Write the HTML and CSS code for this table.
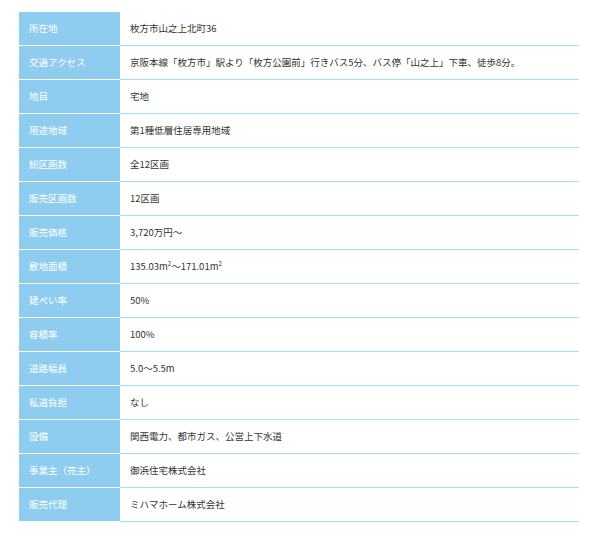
FILE: index.html
```html
<!DOCTYPE html>
<html lang="ja">
<head>
<meta charset="utf-8">
<link rel="stylesheet" href="styles.css">
</head>
<body>
<table class="spec">
<tbody>
<tr><th>所在地</th><td>枚方市山之上北町36</td></tr>
<tr><th>交通アクセス</th><td>京阪本線「枚方市」駅より「枚方公園前」行きバス5分、バス停「山之上」下車、徒歩8分。</td></tr>
<tr><th>地目</th><td>宅地</td></tr>
<tr><th>用途地域</th><td>第1種低層住居専用地域</td></tr>
<tr><th>総区画数</th><td>全12区画</td></tr>
<tr><th>販売区画数</th><td>12区画</td></tr>
<tr><th>販売価格</th><td>3,720万円～</td></tr>
<tr><th>敷地面積</th><td>135.03m<sup>2</sup>～171.01m<sup>2</sup></td></tr>
<tr><th>建ぺい率</th><td>50%</td></tr>
<tr><th>容積率</th><td>100%</td></tr>
<tr><th>道路幅員</th><td>5.0～5.5m</td></tr>
<tr><th>私道負担</th><td>なし</td></tr>
<tr><th>設備</th><td>関西電力、都市ガス、公営上下水道</td></tr>
<tr><th>事業主（売主）</th><td>御浜住宅株式会社</td></tr>
<tr><th>販売代理</th><td>ミハマホーム株式会社</td></tr>
</tbody>
</table>
</body>
</html>
```
FILE: styles.css
```css
html, body {
  margin: 0;
  padding: 0;
  background: #fff;
}
body {
  padding: 12px 0 0 19px;
  font-family: "Noto Sans CJK JP", "Noto Sans", sans-serif;
  font-size: 9.5px;
  color: #333;
}
.spec {
  border-collapse: collapse;
  width: 560px;
}
.spec th,
.spec td {
  height: 33px;
  padding: 0 10px;
  text-align: left;
  vertical-align: middle;
  font-weight: normal;
  line-height: 1;
}
.spec th {
  width: 81px;
  background: #8fcdf0;
  color: #fff;
  border-bottom: 1px solid #fff;
}
.spec td {
  border-bottom: 1px solid #a9dcf6;
}
.spec sup {
  font-size: 6px;
  vertical-align: top;
  position: relative;
  top: -1px;
}
```
